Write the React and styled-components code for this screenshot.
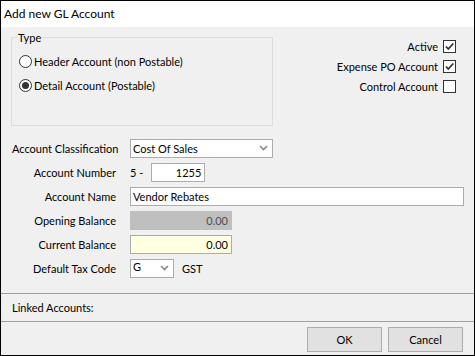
import React from "react";
import styled, { createGlobalStyle } from "styled-components";

const Global = createGlobalStyle`
  html, body { margin: 0; padding: 0; background: #ffffff; }
  body { font-family: Lato, "Noto Sans", "Liberation Sans", sans-serif; font-size: 11px; color: #000; }
  * { box-sizing: border-box; }
`;

const Window = styled.div`
  width: 475px;
  height: 356px;
  border: 1px solid #000;
  display: flex;
  flex-direction: column;
  background: #f0f0f0;
`;

const TitleBar = styled.div`
  height: 26px;
  flex: none;
  background: #fff;
  display: flex;
  align-items: center;
  padding: 0 0 2px 3px;
  font-size: 12px;
`;

const Body = styled.div`
  flex: 1;
  display: flex;
  flex-direction: column;
`;

const Top = styled.div`
  display: flex;
  justify-content: space-between;
  padding: 4px 18px 0 10px;
`;

const GroupBox = styled.fieldset`
  margin: 0;
  width: 262px;
  height: 95px;
  border: 1px solid #dcdcdc;
  padding: 10px 0 0 7px;
  display: flex;
  flex-direction: column;
  gap: 10px;
`;

const Legend = styled.legend`
  padding: 0 1px;
  margin-left: -2px;
  line-height: 13px;
`;

const RadioRow = styled.label`
  display: flex;
  align-items: center;
  gap: 2px;
  height: 14px;
`;

const RadioCircle = styled.span`
  width: 13px;
  height: 13px;
  border-radius: 50%;
  border: 1px solid #333;
  background: #fff;
  display: flex;
  align-items: center;
  justify-content: center;
  &::after {
    content: "";
    width: 7px;
    height: 7px;
    border-radius: 50%;
    background: #333;
    display: ${(p) => (p.$checked ? "block" : "none")};
  }
`;

const Checks = styled.div`
  display: flex;
  flex-direction: column;
  align-items: flex-end;
  gap: 6px;
  padding-top: 8px;
`;

const CheckRow = styled.label`
  display: flex;
  align-items: center;
  gap: 5px;
  height: 14px;
`;

const CheckBox = styled.span`
  width: 13px;
  height: 13px;
  border: 1px solid #333;
  background: #fff;
  display: flex;
  align-items: center;
  justify-content: center;
`;

const Form = styled.div`
  display: grid;
  grid-template-columns: 104px 1fr;
  grid-auto-rows: 24px;
  column-gap: 14px;
  align-items: center;
  padding: 10px 10px 0 11px;
`;

const Label = styled.div`
  text-align: right;
  white-space: nowrap;
`;

const Field = styled.div`
  display: flex;
  align-items: center;
  gap: 8px;
`;

const Input = styled.div`
  height: 19px;
  width: ${(p) => p.$w || "auto"};
  flex: ${(p) => (p.$grow ? 1 : "none")};
  border: 1px solid ${(p) => (p.$disabled ? "#bfbfbf" : "#acacac")};
  background: ${(p) => p.$bg || "#fff"};
  display: flex;
  align-items: center;
  justify-content: ${(p) => (p.$right ? "flex-end" : "flex-start")};
  padding: 0 3px 0 2px;
  color: ${(p) => (p.$disabled ? "#4d4d4d" : "#000")};
`;

const Combo = styled.div`
  height: 19px;
  width: ${(p) => p.$w};
  border: 1px solid #acacac;
  background: #fff;
  display: flex;
  align-items: center;
  justify-content: space-between;
  padding: 0 4px 0 2px;
`;

const ComboText = styled.span`
  margin-top: ${(p) => (p.$raise ? "-3px" : "0")};
`;

const Spacer = styled.div`
  flex: 1;
`;

const Separator = styled.div`
  height: 1px;
  flex: none;
  background: #a0a0a0;
`;

const Linked = styled.div`
  height: 27px;
  flex: none;
  display: flex;
  align-items: center;
  padding-left: 11px;
`;

const Buttons = styled.div`
  height: 33px;
  flex: none;
  display: flex;
  justify-content: flex-end;
  align-items: flex-start;
  gap: 6px;
  padding: 5px 11px 0 0;
`;

const Button = styled.button`
  width: 75px;
  height: 25px;
  border: 1px solid #adadad;
  background: #e1e1e1;
  font-family: inherit;
  font-size: 11px;
  color: #000;
  padding: 0;
`;

const Chevron = () => (
  <svg width="9" height="6" viewBox="0 0 9 6">
    <path d="M1 1 L4.5 4.5 L8 1" fill="none" stroke="#888" strokeWidth="1.6" />
  </svg>
);

const Tick = () => (
  <svg width="11" height="11" viewBox="0 0 11 11">
    <path d="M2 5.5 L4.3 8 L9.3 2.5" fill="none" stroke="#333" strokeWidth="1.8" />
  </svg>
);

export default function App() {
  return (
    <>
      <Global />
      <Window>
        <TitleBar>Add new GL Account</TitleBar>
        <Body>
          <Top>
            <GroupBox>
              <Legend>Type</Legend>
              <RadioRow>
                <RadioCircle />
                Header Account (non Postable)
              </RadioRow>
              <RadioRow>
                <RadioCircle $checked />
                Detail Account (Postable)
              </RadioRow>
            </GroupBox>
            <Checks>
              <CheckRow>
                Active
                <CheckBox><Tick /></CheckBox>
              </CheckRow>
              <CheckRow>
                Expense PO Account
                <CheckBox><Tick /></CheckBox>
              </CheckRow>
              <CheckRow>
                Control Account
                <CheckBox />
              </CheckRow>
            </Checks>
          </Top>
          <Form>
            <Label>Account Classification</Label>
            <Field>
              <Combo $w="143px">
                <span>Cost Of Sales</span>
                <Chevron />
              </Combo>
            </Field>
            <Label>Account Number</Label>
            <Field>
              <span>5 -</span>
              <Input $w="54px" $right>1255</Input>
            </Field>
            <Label>Account Name</Label>
            <Field>
              <Input $grow>Vendor Rebates</Input>
            </Field>
            <Label>Opening Balance</Label>
            <Field>
              <Input $w="102px" $right $bg="#bfbfbf" $disabled>0.00</Input>
            </Field>
            <Label>Current Balance</Label>
            <Field>
              <Input $w="102px" $right $bg="#ffffe1">0.00</Input>
            </Field>
            <Label>Default Tax Code</Label>
            <Field>
              <Combo $w="44px">
                <ComboText $raise>G</ComboText>
                <Chevron />
              </Combo>
              <span>GST</span>
            </Field>
          </Form>
          <Spacer />
          <Separator />
          <Linked>Linked Accounts:</Linked>
          <Separator />
          <Buttons>
            <Button>OK</Button>
            <Button>Cancel</Button>
          </Buttons>
        </Body>
      </Window>
    </>
  );
}
